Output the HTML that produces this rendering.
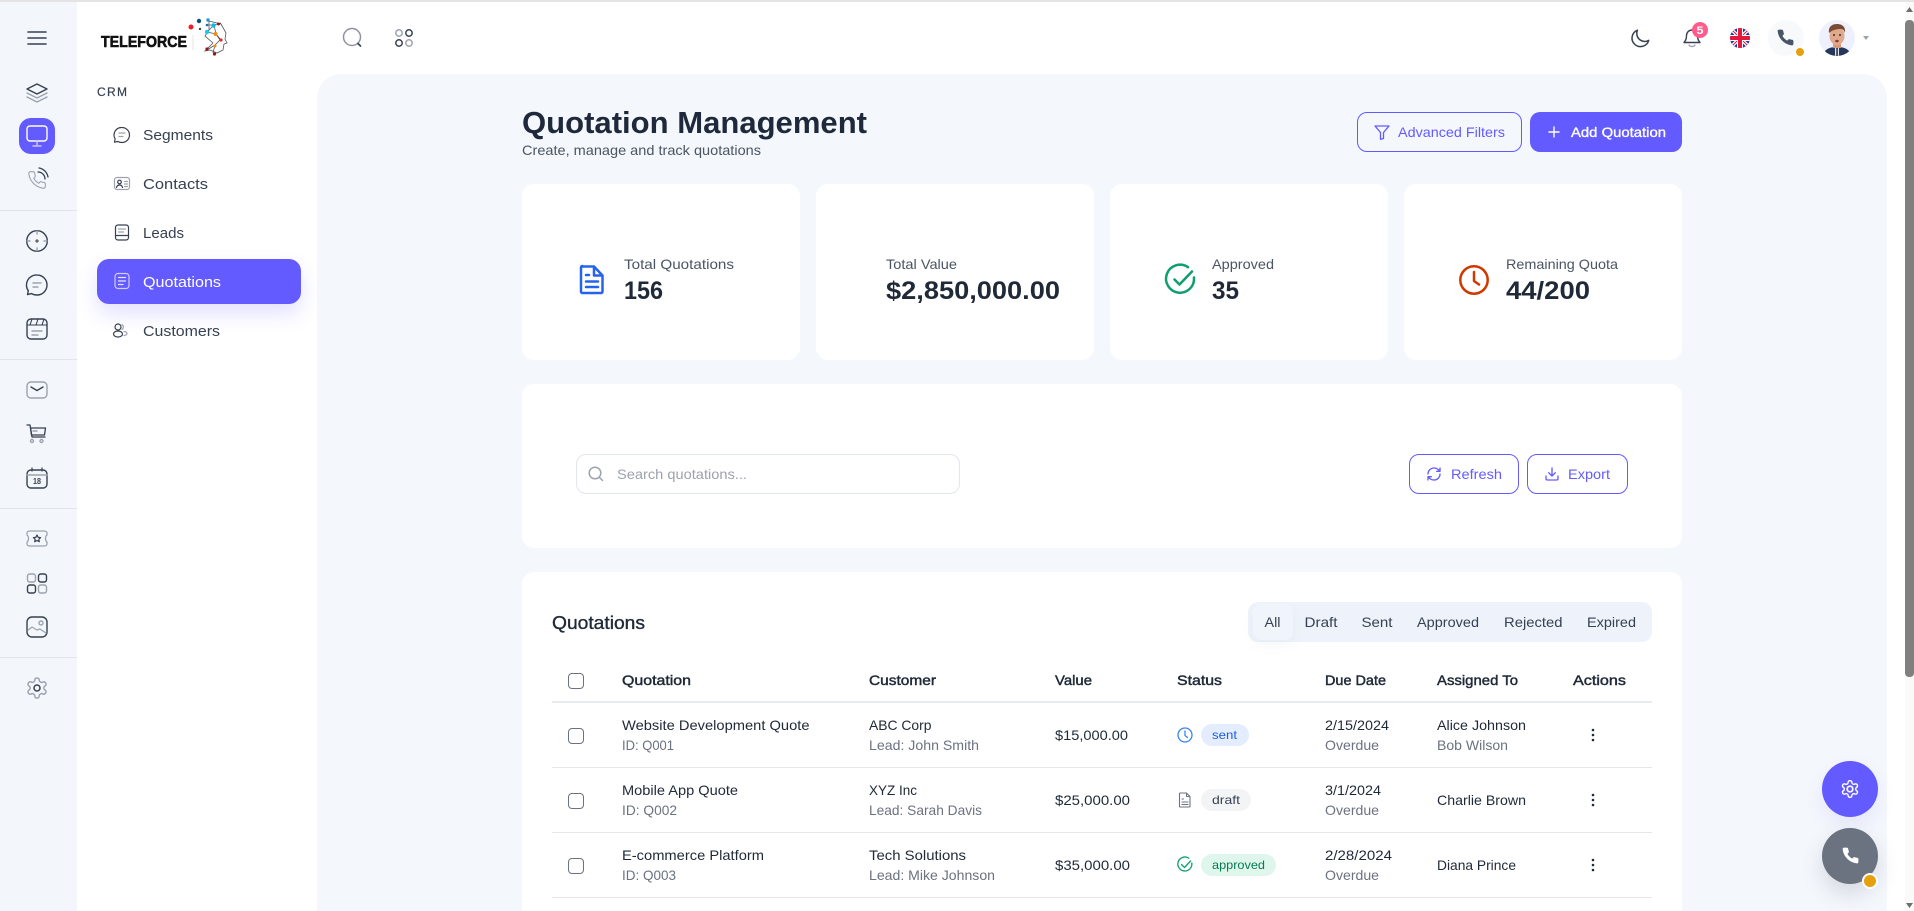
<!DOCTYPE html>
<html lang="en">
<head>
<meta charset="utf-8">
<title>Quotation Management</title>
<style>
html,body{margin:0;padding:0;width:1914px;height:911px;overflow:hidden;background:#fff;font-family:"Liberation Sans",sans-serif}
.b{position:absolute;box-sizing:border-box}
svg.o{position:absolute;left:0;top:0}
svg text{font-family:"Liberation Sans",sans-serif;font-size:14px;fill:#374151}
.m{stroke:currentColor;stroke-width:.35}
.s{fill:#6b7280!important}
.h{fill:#1f2937!important;color:#1f2937;stroke:currentColor;stroke-width:.45}
.d{fill:#1f2937!important}
.v{font-size:25px!important;font-weight:700;fill:#1f2937!important}
.l{fill:#4b5563!important}
.n{font-size:15px!important;fill:#374151!important}
.p{fill:#635bff!important}
.f{fill:none;stroke-linecap:round;stroke-linejoin:round}
</style>
</head>
<body>
<div class="b" style="left:0;top:0;width:1914px;height:2px;background:#e4e4e4"></div>
<div class="b" style="left:0;top:2px;width:77px;height:909px;background:#f3f6fb"></div>
<div class="b" style="left:0;top:210px;width:77px;height:1px;background:#e1e4e9"></div>
<div class="b" style="left:0;top:359px;width:77px;height:1px;background:#e1e4e9"></div>
<div class="b" style="left:0;top:508px;width:77px;height:1px;background:#e1e4e9"></div>
<div class="b" style="left:0;top:657px;width:77px;height:1px;background:#e1e4e9"></div>
<div class="b" style="left:19px;top:118px;width:36px;height:36px;border-radius:12px;background:#635bff"></div>
<div class="b" style="left:97px;top:259px;width:204px;height:45px;border-radius:12px;background:#635bff;box-shadow:0 10px 20px rgba(99,91,255,.18)"></div>

<div class="b" style="left:317px;top:74px;width:1570px;height:837px;border-radius:24px 24px 0 0;background:#f4f7fc"></div>

<div class="b" style="left:522px;top:184px;width:278px;height:176px;border-radius:12px;background:#fff"></div>
<div class="b" style="left:816px;top:184px;width:278px;height:176px;border-radius:12px;background:#fff"></div>
<div class="b" style="left:1110px;top:184px;width:278px;height:176px;border-radius:12px;background:#fff"></div>
<div class="b" style="left:1404px;top:184px;width:278px;height:176px;border-radius:12px;background:#fff"></div>

<div class="b" style="left:1357px;top:112px;width:165px;height:40px;border-radius:10px;border:1px solid #635bff"></div>
<div class="b" style="left:1530px;top:112px;width:152px;height:40px;border-radius:10px;background:#635bff"></div>

<div class="b" style="left:522px;top:384px;width:1160px;height:164px;border-radius:12px;background:#fff"></div>
<div class="b" style="left:576px;top:454px;width:384px;height:40px;border-radius:10px;border:1px solid #e2e6ee;background:#fff"></div>
<div class="b" style="left:1409px;top:454px;width:110px;height:40px;border-radius:10px;border:1px solid #635bff"></div>
<div class="b" style="left:1527px;top:454px;width:101px;height:40px;border-radius:10px;border:1px solid #635bff"></div>

<div class="b" style="left:522px;top:572px;width:1160px;height:339px;border-radius:12px 12px 0 0;background:#fff"></div>
<div class="b" style="left:1248px;top:602px;width:404px;height:40px;border-radius:10px;background:#eef3fb"></div>
<div class="b" style="left:1253px;top:604px;width:40px;height:36px;border-radius:8px;background:#f0f4fb;box-shadow:0 6px 12px rgba(100,116,139,.05)"></div>

<div class="b" style="left:552px;top:701px;width:1100px;height:2px;background:#e8ebf0"></div>
<div class="b" style="left:552px;top:767px;width:1100px;height:1px;background:#e5e7eb"></div>
<div class="b" style="left:552px;top:832px;width:1100px;height:1px;background:#e5e7eb"></div>
<div class="b" style="left:552px;top:897px;width:1100px;height:1px;background:#e5e7eb"></div>

<div class="b" style="left:568px;top:673px;width:16px;height:16px;border-radius:4px;border:1px solid #6b7280"></div>
<div class="b" style="left:568px;top:728px;width:16px;height:16px;border-radius:4px;border:1px solid #6b7280"></div>
<div class="b" style="left:568px;top:793px;width:16px;height:16px;border-radius:4px;border:1px solid #6b7280"></div>
<div class="b" style="left:568px;top:858px;width:16px;height:16px;border-radius:4px;border:1px solid #6b7280"></div>

<div class="b" style="left:1201px;top:724px;width:48px;height:22px;border-radius:11px;background:#e3edff"></div>
<div class="b" style="left:1201px;top:789px;width:50px;height:22px;border-radius:11px;background:#f3f4f6"></div>
<div class="b" style="left:1201px;top:854px;width:75px;height:22px;border-radius:11px;background:#dff6ec"></div>

<div class="b" style="left:1822px;top:761px;width:56px;height:56px;border-radius:50%;background:#635bff;box-shadow:0 8px 18px rgba(99,91,255,.10)"></div>
<div class="b" style="left:1822px;top:828px;width:56px;height:56px;border-radius:50%;background:#6b7280;box-shadow:0 10px 22px rgba(75,85,99,.18)"></div>
<div class="b" style="left:1862px;top:873px;width:16px;height:16px;border-radius:50%;background:#e6a00e;border:2px solid #fff"></div>

<div class="b" style="left:1905px;top:2px;width:9px;height:909px;background:#fafafa"></div>
<div class="b" style="left:1905px;top:20px;width:9px;height:657px;border-radius:4px;background:#808080"></div>

<svg class="o" width="1914" height="911" viewBox="0 0 1914 911" xmlns="http://www.w3.org/2000/svg">
<defs>
<symbol id="ph" viewBox="0 0 24 24"><path d="M22 16.92v3a2 2 0 0 1-2.18 2 19.79 19.79 0 0 1-8.63-3.07 19.5 19.5 0 0 1-6-6 19.79 19.79 0 0 1-3.07-8.67A2 2 0 0 1 4.11 2h3a2 2 0 0 1 2 1.72 12.84 12.84 0 0 0 .7 2.81 2 2 0 0 1-.45 2.11L8.09 9.91a16 16 0 0 0 6 6l1.27-1.27a2 2 0 0 1 2.11-.45 12.84 12.84 0 0 0 2.81.7A2 2 0 0 1 22 16.92z"/></symbol>
<symbol id="gr" viewBox="0 0 24 24"><path d="M12.22 2h-.44a2 2 0 0 0-2 2v.18a2 2 0 0 1-1 1.73l-.43.25a2 2 0 0 1-2 0l-.15-.08a2 2 0 0 0-2.73.73l-.22.38a2 2 0 0 0 .73 2.73l.15.1a2 2 0 0 1 1 1.72v.51a2 2 0 0 1-1 1.74l-.15.09a2 2 0 0 0-.73 2.73l.22.38a2 2 0 0 0 2.73.73l.15-.08a2 2 0 0 1 2 0l.43.25a2 2 0 0 1 1 1.73V20a2 2 0 0 0 2 2h.44a2 2 0 0 0 2-2v-.18a2 2 0 0 1 1-1.73l.43-.25a2 2 0 0 1 2 0l.15.08a2 2 0 0 0 2.73-.73l.22-.39a2 2 0 0 0-.73-2.73l-.15-.08a2 2 0 0 1-1-1.74v-.5a2 2 0 0 1 1-1.74l.15-.09a2 2 0 0 0 .73-2.73l-.22-.38a2 2 0 0 0-2.73-.73l-.15.08a2 2 0 0 1-2 0l-.43-.25a2 2 0 0 1-1-1.73V4a2 2 0 0 0-2-2z"/></symbol>
<clipPath id="fc"><circle cx="1740" cy="38" r="10"/></clipPath>
<clipPath id="ac"><circle cx="1837" cy="38" r="18"/></clipPath>
</defs>

<!-- scrollbar arrows -->
<path d="M1909.500 7l3.500 5h-7zM1909.500 908l3.500-5h-7z" fill="#6e6e6e"/>

<!-- rail icons -->
<g class="f" stroke="#374151" stroke-width="1.6">
<path d="M28 32h18M28 38h18M28 44h18"/>
<path d="M37 84l10 5-10 5-10-5z" stroke-width="1.4"/>
<path d="M27 93l10 5 10-5M27 97l10 5 10-5" stroke="#9ca3af" stroke-width="1.4"/>
</g>
<g class="f" stroke="#fff" stroke-width="1.4">
<rect x="27" y="126" width="20" height="15" rx="3"/>
<path d="M37 141v4M33 146h8" stroke="#c9c6ff"/>
</g>
<g class="f" stroke="#9ca3af" stroke-width="1.3">
<use href="#ph" x="27" y="170" width="20" height="20" fill="none"/>
<path d="M38 172a7 7 0 0 1 7 7M39 168a11 11 0 0 1 9 9" stroke="#374151"/>
</g>
<g class="f" stroke="#374151" stroke-width="1.4">
<circle cx="37" cy="241" r="10.300"/>
<path d="M37 231v3M37 248v3M27 241h3M44 241h3" stroke="#9ca3af"/>
<path d="M35.500 241h3M37 239.500v3" stroke-width="1.100"/>
<path d="M37 275a10 10 0 0 1 0 20c-2 0-4-.5-5.500-1.400l-4 1 .8-3.800A10 10 0 0 1 37 275z"/>
<path d="M33 283h8M33 287h5" stroke="#9ca3af"/>
<rect x="27" y="319" width="20" height="20" rx="4"/>
<path d="M27 325h20M32 319l-2 6M38 319l-2 6M44 319l-2 6" stroke-width="1.100"/>
<path d="M32 331h10M32 335h6" stroke="#9ca3af"/>
<rect x="27" y="382" width="20" height="16" rx="4" stroke="#9ca3af"/>
<path d="M31 387l6 3.500 6-3.500"/>
<path d="M27 425h3l2 12h13" stroke-width="1.300"/>
<path d="M30.500 428h15l-1 7h-13z" stroke-width="1.300"/>
<path d="M33 431h4" stroke="#9ca3af"/>
<circle cx="32" cy="441" r="1.500" stroke="#9ca3af"/>
<circle cx="41.500" cy="441" r="1.500" stroke="#9ca3af"/>
<rect x="27" y="470" width="20" height="18" rx="4"/>
<path d="M27 475h20" stroke="#9ca3af"/>
<path d="M32 468v3M42 468v3" stroke-width="1.200"/>
<path d="M27 533c0-1 1-2 3-2h14c2 0 3 1 3 2v2s-1.500 1-1.500 3.500 1.500 3.500 1.500 3.500v2c0 1-1 2-3 2H30c-2 0-3-1-3-2v-2s1.500-1 1.500-3.500-1.500-3.500-1.500-3.500z" stroke="#9ca3af" stroke-width="1.300"/>
<path d="M37 535l1.100 2.300 2.500.3-1.800 1.700.5 2.400-2.300-1.200-2.300 1.200.5-2.400-1.800-1.700 2.500-.3z" stroke-width="1.200"/>
<rect x="27.500" y="574" width="8" height="8" rx="2.200" stroke="#9ca3af"/>
<rect x="38.500" y="574" width="8" height="8" rx="2.200"/>
<rect x="27.500" y="585" width="8" height="8" rx="2.200"/>
<rect x="38.500" y="585" width="8" height="8" rx="2.200" stroke="#9ca3af"/>
<rect x="27" y="617" width="20" height="20" rx="5"/>
<circle cx="41" cy="623" r="2" stroke="#9ca3af"/>
<path d="M28 630l4-3 5 3 3-1 6 4" stroke="#9ca3af" stroke-width="1.200"/>
</g>
<text x="33" y="484" textLength="8" lengthAdjust="spacingAndGlyphs" style="font-size:8px;font-weight:700;fill:#374151">18</text>
<g class="f" stroke="#9ca3af" stroke-width="1.500"><use href="#gr" x="25" y="676" width="24" height="24" fill="none"/></g>
<circle cx="37" cy="688" r="3" fill="none" stroke="#374151" stroke-width="1.500"/>

<!-- logo -->
<text x="101" y="47" textLength="86" lengthAdjust="spacingAndGlyphs" style="font-size:15.500px;font-weight:700;fill:#111;stroke:#111;stroke-width:.6">TELEFORCE</text>
<path d="M193 35v15" stroke="#e5e5e5" stroke-width="1"/>
<g fill="none" stroke="#555" stroke-width=".8">
<path d="M209 21l12 3 5 9-1 6 2 4-3 1-1 6-6 3-7-3-5 1 8-8-8-7 4-6z"/>
<path d="M207 32l7-7 2 9 4 6-5 5-8 5M216 34l5 6M214 25l7-2M208 25h6M207 32l9 2M215 45l-2 8"/>
</g>
<circle cx="191" cy="27" r="2.500" fill="#ef1c25"/><circle cx="199" cy="21" r="2.200" fill="#0d4f7c"/>
<circle cx="200" cy="29" r="1.200" fill="#444"/><circle cx="208" cy="20" r="1.700" fill="#1e9ad6"/>
<circle cx="207" cy="25" r="1.300" fill="#1d6fa5"/><circle cx="213.500" cy="25.500" r="2.200" fill="#10b8e8"/>
<circle cx="207" cy="32" r="2.200" fill="#23c4ee"/><circle cx="218.500" cy="24" r="1.500" fill="#8b1a1a"/>
<circle cx="215.500" cy="34" r="2" fill="#f28a1c"/><circle cx="221" cy="40" r="1.600" fill="#e22b2b"/>
<circle cx="215" cy="46" r="1.500" fill="#f28a1c"/><circle cx="207" cy="49" r="1.600" fill="#8b1a1a"/>
<circle cx="214.500" cy="54" r="1.600" fill="#8b1a1a"/>

<!-- header icons -->
<g class="f" stroke="#8f949c" stroke-width="1.500"><circle cx="352" cy="37" r="8.500"/></g>
<path d="M358 43.500l2.500 2.500" stroke="#374151" stroke-width="1.600" stroke-linecap="round"/>
<g fill="none" stroke-width="1.500">
<circle cx="399" cy="33" r="3.200" stroke="#9ca3af"/><circle cx="409" cy="33" r="3.200" stroke="#374151"/>
<circle cx="399" cy="43" r="3.200" stroke="#374151"/><circle cx="409" cy="43" r="3.200" stroke="#9ca3af"/>
</g>
<path class="f" d="M1638 30a8.500 8.500 0 1 0 10.500 11A8 8 0 0 1 1638 30z" stroke="#374151" stroke-width="1.500" transform="rotate(-4 1640 38)"/>
<path class="f" d="M1692 30a5.500 5.500 0 0 0-5.500 5.500c0 4-1 5.500-2.500 7h16c-1.500-1.500-2.500-3-2.500-7a5.500 5.500 0 0 0-5.500-5.500z" stroke="#374151" stroke-width="1.400"/>
<path d="M1689 44.500a3 2 0 0 0 6 0" fill="none" stroke="#9ca3af" stroke-width="1.400"/>
<circle cx="1700" cy="30" r="8" fill="#ff5c8d"/>
<text x="1696.500" y="34" textLength="7" lengthAdjust="spacingAndGlyphs" style="font-size:11px;fill:#fff;font-weight:700">5</text>
<g clip-path="url(#fc)">
<rect x="1730" y="28" width="20" height="20" fill="#1f3a9e"/>
<path d="M1730 28l20 20M1750 28l-20 20" stroke="#fff" stroke-width="3.500"/>
<path d="M1730 28l20 20M1750 28l-20 20" stroke="#e3193f" stroke-width="1"/>
<path d="M1740 28v20M1730 38h20" stroke="#fff" stroke-width="6"/>
<path d="M1740 28v20M1730 38h20" stroke="#e3193f" stroke-width="4"/>
</g>
<circle cx="1786" cy="38" r="18" fill="#f8f9fb"/>
<use href="#ph" x="1776" y="28" width="19" height="19" fill="#475569"/>
<circle cx="1800" cy="52" r="4" fill="#e6a00e"/>
<circle cx="1837" cy="38" r="18" fill="#eef0fd"/>
<g clip-path="url(#ac)">
<path d="M1823 56c1-7 7-9 14-9s13 2 14 9z" fill="#27375c"/>
<path d="M1835 47l2 2 2-2v9h-4z" fill="#dfe3ea"/><path d="M1836.300 48h1.500v8h-1.500z" fill="#1f2a44"/>
<rect x="1833" y="41" width="8" height="7" fill="#d59b7e"/>
<ellipse cx="1837" cy="36" rx="7.500" ry="9" fill="#e0a98c"/>
<path d="M1829 33c-1-7 4-9 8-9s9 2 8 9c-1-3-2-4-5-4s-8 1-11 4z" fill="#7b4a33"/>
<circle cx="1834" cy="35" r="1" fill="#333"/><circle cx="1840" cy="35" r="1" fill="#333"/>
<ellipse cx="1837" cy="41" rx="1.800" ry="1.300" fill="#8c3b2d"/>
</g>
<path d="M1863 36h6l-3 4z" fill="#9aa5b1"/>

<!-- nav -->
<text x="97" y="96" textLength="30" style="font-size:12px;font-weight:400;fill:#374151;stroke:#374151;stroke-width:.2">CRM</text>
<g class="f" stroke="#374151" stroke-width="1.200">
<path d="M122 127.500a7.500 7.500 0 0 1 0 15c-1.500 0-3-.3-4-1l-3.500.6.600-3.300a7.500 7.500 0 0 1 6.900-11.300z"/>
<path d="M119 133h6M119 136.500h4" stroke="#9ca3af"/>
<rect x="114.500" y="177.500" width="15" height="12" rx="2.500" stroke="#9ca3af"/>
<circle cx="119.500" cy="182" r="1.800"/><path d="M116.500 187.500c.5-2 1.500-2.500 3-2.500s2.500.5 3 2.500"/>
<path d="M124.500 181.500h3M124.500 184h3M124.500 186.500h3" stroke="#9ca3af"/>
<rect x="115.500" y="225" width="13" height="15" rx="2.500"/>
<path d="M118.500 229h7M118.500 232h5" stroke="#9ca3af"/><path d="M115.500 235.500h13"/>
<circle cx="118" cy="327" r="3"/><ellipse cx="118" cy="334" rx="4.500" ry="3"/>
<path d="M122 324.500a3 3 0 0 1 0 5M124 331.500a3 2 0 0 1 0 4" stroke="#9ca3af"/>
</g>
<g class="f" stroke="#cfccff" stroke-width="1.200">
<rect x="115" y="273.500" width="14" height="15" rx="3"/>
<path d="M118.500 277.500h7M118.500 281h7M118.500 284.500h4.500" stroke="#fff" stroke-opacity=".85"/>
</g>
<text class="n" x="143" y="140" textLength="70" lengthAdjust="spacingAndGlyphs">Segments</text>
<text class="n" x="143" y="189" textLength="65" lengthAdjust="spacingAndGlyphs">Contacts</text>
<text class="n" x="143" y="238" textLength="41" lengthAdjust="spacingAndGlyphs">Leads</text>
<text x="143" y="287" textLength="78" lengthAdjust="spacingAndGlyphs" style="font-size:15px;fill:#fff">Quotations</text>
<text class="n" x="143" y="336" textLength="77" lengthAdjust="spacingAndGlyphs">Customers</text>

<!-- heading -->
<text x="522" y="133" textLength="345" lengthAdjust="spacingAndGlyphs" style="font-size:31px;font-weight:700;fill:#1e293b">Quotation Management</text>
<text class="l" x="522" y="155" textLength="239" lengthAdjust="spacingAndGlyphs">Create, manage and track quotations</text>

<path class="f" d="M1375 126h14l-5.500 6.500v6l-3 .8v-6.800z" stroke="#635bff" stroke-width="1.300"/>
<text class="p" x="1398" y="137" textLength="107" lengthAdjust="spacingAndGlyphs">Advanced Filters</text>
<path d="M1554 127v10M1549 132h10" stroke="#fff" stroke-width="1.400" stroke-linecap="round"/>
<text x="1571" y="137" textLength="95" lengthAdjust="spacingAndGlyphs" class="m" style="fill:#fff;color:#fff">Add Quotation</text>

<!-- stat cards -->
<g class="f" stroke="#2563eb" stroke-width="2.500">
<path d="M582.500 266.500h11.500l8.500 9v16a1.500 1.500 0 0 1-1.500 1.500h-18.500a1.500 1.500 0 0 1-1.500-1.500v-24a1.500 1.500 0 0 1 1.500-1.500z"/>
<path d="M594 267v8.500h8M586 275h3M586 281.500h12M586 287h12"/>
</g>
<text class="l" x="624" y="269" textLength="110" lengthAdjust="spacingAndGlyphs">Total Quotations</text>
<text class="v" x="624" y="299" textLength="39" lengthAdjust="spacingAndGlyphs">156</text>
<text class="l" x="886" y="269" textLength="71" lengthAdjust="spacingAndGlyphs">Total Value</text>
<text class="v" x="886" y="299" textLength="174" lengthAdjust="spacingAndGlyphs">$2,850,000.00</text>
<g class="f" stroke="#0e9f6e" stroke-width="2.500">
<path d="M1194 277.500a14 14 0 1 1-6-10.300"/>
<path d="M1174.500 279.500l5 5 12.500-13"/>
</g>
<text class="l" x="1212" y="269" textLength="62" lengthAdjust="spacingAndGlyphs">Approved</text>
<text class="v" x="1212" y="299" textLength="27" lengthAdjust="spacingAndGlyphs">35</text>
<g class="f" stroke="#d03801" stroke-width="2.500">
<circle cx="1474" cy="280" r="13.700"/>
<path d="M1474 272v9l5 3.500"/>
</g>
<text class="l" x="1506" y="269" textLength="112" lengthAdjust="spacingAndGlyphs">Remaining Quota</text>
<text class="v" x="1506" y="299" textLength="84" lengthAdjust="spacingAndGlyphs">44/200</text>

<!-- toolbar -->
<g class="f" stroke="#9ca3af" stroke-width="1.500"><circle cx="595" cy="473" r="5.800"/><path d="M599.500 477.500l3 3"/></g>
<text x="617" y="479" textLength="130" lengthAdjust="spacingAndGlyphs" style="fill:#9ca3af">Search quotations...</text>
<g class="f" stroke="#635bff" stroke-width="2" transform="translate(1426 466) scale(.667)">
<path d="M3 12a9 9 0 0 1 9-9 9.750 9.750 0 0 1 6.740 2.740L21 8M21 3v5h-5M21 12a9 9 0 0 1-9 9 9.750 9.750 0 0 1-6.740-2.740L3 16M8 16H3v5"/>
</g>
<text class="p" x="1451" y="479" textLength="51" lengthAdjust="spacingAndGlyphs">Refresh</text>
<g class="f" stroke="#635bff" stroke-width="2" transform="translate(1544 466) scale(.667)">
<path d="M21 15v4a2 2 0 0 1-2 2H5a2 2 0 0 1-2-2v-4M7 10l5 5 5-5M12 15V3"/>
</g>
<text class="p" x="1568" y="479" textLength="42" lengthAdjust="spacingAndGlyphs">Export</text>

<!-- table head -->
<text x="552" y="629" textLength="93" lengthAdjust="spacingAndGlyphs" class="m" style="font-size:18px;fill:#1f2937;color:#1f2937">Quotations</text>
<text x="1264.500" y="627" textLength="16" lengthAdjust="spacingAndGlyphs">All</text>
<text x="1304.500" y="627" textLength="33" lengthAdjust="spacingAndGlyphs">Draft</text>
<text x="1361.500" y="627" textLength="31" lengthAdjust="spacingAndGlyphs">Sent</text>
<text x="1417" y="627" textLength="62" lengthAdjust="spacingAndGlyphs">Approved</text>
<text x="1504" y="627" textLength="58.500" lengthAdjust="spacingAndGlyphs">Rejected</text>
<text x="1587" y="627" textLength="49" lengthAdjust="spacingAndGlyphs">Expired</text>

<text class="h" x="622" y="685" textLength="69" lengthAdjust="spacingAndGlyphs">Quotation</text>
<text class="h" x="869" y="685" textLength="67" lengthAdjust="spacingAndGlyphs">Customer</text>
<text class="h" x="1055" y="685" textLength="37" lengthAdjust="spacingAndGlyphs">Value</text>
<text class="h" x="1177" y="685" textLength="45" lengthAdjust="spacingAndGlyphs">Status</text>
<text class="h" x="1325" y="685" textLength="61" lengthAdjust="spacingAndGlyphs">Due Date</text>
<text class="h" x="1437" y="685" textLength="81" lengthAdjust="spacingAndGlyphs">Assigned To</text>
<text class="h" x="1573" y="685" textLength="53" lengthAdjust="spacingAndGlyphs">Actions</text>

<!-- row 1 -->
<text class="d" x="622" y="730" textLength="187.500" lengthAdjust="spacingAndGlyphs">Website Development Quote</text>
<text class="s" x="622" y="750" textLength="52" lengthAdjust="spacingAndGlyphs">ID: Q001</text>
<text class="d" x="869" y="730" textLength="62.500" lengthAdjust="spacingAndGlyphs">ABC Corp</text>
<text class="s" x="869" y="750" textLength="110" lengthAdjust="spacingAndGlyphs">Lead: John Smith</text>
<text class="d" x="1055" y="740" textLength="73" lengthAdjust="spacingAndGlyphs">$15,000.00</text>
<g class="f" stroke="#3b82f6" stroke-width="1.300"><circle cx="1185" cy="735" r="7"/><path d="M1185 731v4.500l2.500 2"/></g>
<text x="1212" y="739" textLength="25" lengthAdjust="spacingAndGlyphs" style="font-size:12px;fill:#1d5ee0">sent</text>
<text class="d" x="1325" y="730" textLength="64" lengthAdjust="spacingAndGlyphs">2/15/2024</text>
<text class="s" x="1325" y="750" textLength="54" lengthAdjust="spacingAndGlyphs">Overdue</text>
<text class="d" x="1437" y="730" textLength="89" lengthAdjust="spacingAndGlyphs">Alice Johnson</text>
<text class="s" x="1437" y="750" textLength="71" lengthAdjust="spacingAndGlyphs">Bob Wilson</text>
<g fill="#1f2937"><circle cx="1593" cy="730" r="1.300"/><circle cx="1593" cy="735" r="1.300"/><circle cx="1593" cy="740" r="1.300"/></g>

<!-- row 2 -->
<text class="d" x="622" y="795" textLength="116" lengthAdjust="spacingAndGlyphs">Mobile App Quote</text>
<text class="s" x="622" y="815" textLength="55" lengthAdjust="spacingAndGlyphs">ID: Q002</text>
<text class="d" x="869" y="795" textLength="48" lengthAdjust="spacingAndGlyphs">XYZ Inc</text>
<text class="s" x="869" y="815" textLength="113" lengthAdjust="spacingAndGlyphs">Lead: Sarah Davis</text>
<text class="d" x="1055" y="805" textLength="75" lengthAdjust="spacingAndGlyphs">$25,000.00</text>
<g class="f" stroke="#6b7280" stroke-width="1.100"><path d="M1180 793h6.500l3.500 3.500v10a.5.5 0 0 1-.5.5h-9.500a.5.5 0 0 1-.5-.5v-13a.5.5 0 0 1 .5-.5zM1186.500 793v3.500h3.500M1182 799h1.500M1182 802h6M1182 804.500h6"/></g>
<text x="1212" y="804" textLength="28" lengthAdjust="spacingAndGlyphs" style="font-size:12px;fill:#374151">draft</text>
<text class="d" x="1325" y="795" textLength="56" lengthAdjust="spacingAndGlyphs">3/1/2024</text>
<text class="s" x="1325" y="815" textLength="54" lengthAdjust="spacingAndGlyphs">Overdue</text>
<text class="d" x="1437" y="805" textLength="89" lengthAdjust="spacingAndGlyphs">Charlie Brown</text>
<g fill="#1f2937"><circle cx="1593" cy="795" r="1.300"/><circle cx="1593" cy="800" r="1.300"/><circle cx="1593" cy="805" r="1.300"/></g>

<!-- row 3 -->
<text class="d" x="622" y="860" textLength="142" lengthAdjust="spacingAndGlyphs">E-commerce Platform</text>
<text class="s" x="622" y="880" textLength="54" lengthAdjust="spacingAndGlyphs">ID: Q003</text>
<text class="d" x="869" y="860" textLength="97" lengthAdjust="spacingAndGlyphs">Tech Solutions</text>
<text class="s" x="869" y="880" textLength="126" lengthAdjust="spacingAndGlyphs">Lead: Mike Johnson</text>
<text class="d" x="1055" y="870" textLength="75" lengthAdjust="spacingAndGlyphs">$35,000.00</text>
<g class="f" stroke="#0e9f6e" stroke-width="1.300"><path d="M1191.800 863a7 7 0 1 1-3-4.800"/><path d="M1181.500 864.500l3 3 6-6.500"/></g>
<text x="1212" y="869" textLength="53" lengthAdjust="spacingAndGlyphs" style="font-size:12px;fill:#067a55">approved</text>
<text class="d" x="1325" y="860" textLength="67" lengthAdjust="spacingAndGlyphs">2/28/2024</text>
<text class="s" x="1325" y="880" textLength="54" lengthAdjust="spacingAndGlyphs">Overdue</text>
<text class="d" x="1437" y="870" textLength="79" lengthAdjust="spacingAndGlyphs">Diana Prince</text>
<g fill="#1f2937"><circle cx="1593" cy="860" r="1.300"/><circle cx="1593" cy="865" r="1.300"/><circle cx="1593" cy="870" r="1.300"/></g>

<!-- floating buttons -->
<g class="f" stroke="#fff" stroke-width="1.700"><use href="#gr" x="1840" y="779" width="20" height="20" fill="none"/><circle cx="1850" cy="789" r="2.800"/></g>
<use href="#ph" x="1841" y="846" width="19" height="19" fill="#fff"/>
</svg>
</body>
</html>
